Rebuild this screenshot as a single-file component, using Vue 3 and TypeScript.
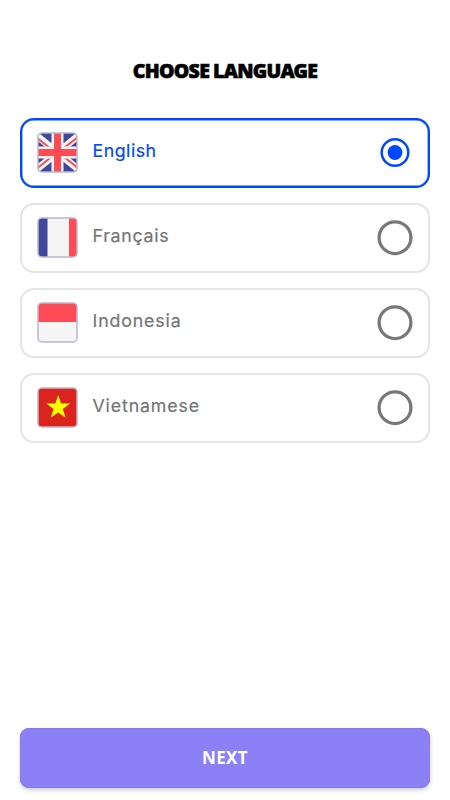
<script setup lang="ts">
import { ref } from 'vue'

interface Language {
  code: string
  name: string
}

const languages: Language[] = [
  { code: 'en', name: 'English' },
  { code: 'fr', name: 'Français' },
  { code: 'id', name: 'Indonesia' },
  { code: 'vi', name: 'Vietnamese' },
]
const selected = ref('en')
</script>

<template>
  <main class="screen">
    <h1 class="title">CHOOSE LANGUAGE</h1>
    <div class="list" role="radiogroup">
      <button
        v-for="lang in languages"
        :key="lang.code"
        class="row"
        :class="[lang.code, { active: selected === lang.code }]"
        role="radio"
        :aria-checked="selected === lang.code"
        @click="selected = lang.code"
      >
        <svg class="flag" viewBox="0 0 41 41">
          <defs>
            <clipPath :id="'clip-' + lang.code"><rect x="1" y="1" width="39" height="39" rx="3.5" /></clipPath>
          </defs>
          <g :clip-path="`url(#clip-${lang.code})`">
            <template v-if="lang.code === 'en'">
              <path fill="#41479b" d="M0 0h41v41H0z" />
              <path stroke="#f5f5f5" stroke-width="7" d="M0 4 41 37M41 4 0 37" />
              <path stroke="#ff4b55" stroke-width="2" d="M0 6 16 18.500M24 22.500 41 36M41 5 25 17.500M16 23.500 0 36.500" />
              <path stroke="#f5f5f5" stroke-width="12" d="M20.500 0v41M0 20.500h41" />
              <path stroke="#ff4b55" stroke-width="7" d="M20.500 0v41M0 20.500h41" />
            </template>
            <template v-else-if="lang.code === 'fr'">
              <path fill="#f5f5f5" d="M0 0h41v41H0z" />
              <path fill="#41479b" d="M0 0h10.500v41H0z" />
              <path fill="#ff4b55" d="M32 0h9v41h-9z" />
            </template>
            <template v-else-if="lang.code === 'id'">
              <path fill="#f5f5f5" d="M0 0h41v41H0z" />
              <path fill="#ff4b55" d="M0 0h41v20H0z" />
            </template>
            <template v-else>
              <path fill="#dc241f" d="M0 0h41v41H0z" />
              <path fill="#ff0" d="m21.200 8 2.900 8.600h9l-7.300 5.400 2.800 8.700-7.400-5.300-7.400 5.300 2.800-8.700-7.300-5.400h9z" />
            </template>
          </g>
          <rect class="frame" x="1" y="1" width="39" height="39" rx="4" />
        </svg>
        <span class="name">{{ lang.name }}</span>
        <svg class="radio" viewBox="0 0 36 36">
          <template v-if="selected === lang.code">
            <circle cx="18" cy="17.500" r="13.300" fill="none" stroke="#0048ff" stroke-width="2.500" />
            <circle cx="18" cy="17.500" r="7.400" fill="#0048ff" />
          </template>
          <circle v-else cx="18" cy="17.700" r="15.900" fill="none" stroke="#787878" stroke-width="3.300" />
        </svg>
      </button>
    </div>
    <button class="next">NEXT</button>
  </main>
</template>

<style>
body {
  background: #fff;
}
</style>

<style scoped>
.screen {
  box-sizing: border-box;
  height: 800px;
  padding: 58px 20px 12.500px;
  display: flex;
  flex-direction: column;
}
.title {
  margin: 0;
  height: 60px;
  text-align: center;
  white-space: nowrap;
  font: 900 19.500px/26px "Noto Sans", sans-serif;
  letter-spacing: -0.680px;
  word-spacing: -0.500px;
  -webkit-text-stroke: 0.600px #000;
  color: #000;
}
.list {
  display: flex;
  flex-direction: column;
  gap: 15.500px;
}
.row {
  box-sizing: border-box;
  display: flex;
  align-items: center;
  width: 100%;
  height: 69.500px;
  padding: 0 15px 0 15px;
  border: 2px solid #e5e5e5;
  border-radius: 14px;
  background: #fff;
  color: #757575;
  text-align: left;
}
.active {
  border-color: #0048ff;
  box-shadow: inset 0 0 0 0.400px #0048ff;
  color: #0048ff;
}
.flag {
  width: 41px;
  height: 41px;
}
.frame {
  fill: none;
  stroke: #bcb6cc;
  stroke-width: 1.500;
}
.name {
  flex: 1;
  margin-left: 14.500px;
  padding-bottom: 4px;
  font: 400 17.800px/24px Inter, sans-serif;
  letter-spacing: 0.850px;
  -webkit-text-stroke: 0.200px currentColor;
}
.active .name {
  letter-spacing: 0.500px;
}
.fr .name {
  letter-spacing: 0.700px;
}
.radio {
  width: 36px;
  height: 36px;
}
.next {
  height: 60px;
  margin-top: auto;
  border: 0;
  border-radius: 9px;
  background: #8b80f6;
  box-shadow: 0 2px 4px rgb(0 0 0 / 20%), inset 0 0 0 1px #857bed;
  color: #fff;
  font: 700 17px/24px "Noto Sans", sans-serif;
  letter-spacing: 0.400px;
}
</style>
